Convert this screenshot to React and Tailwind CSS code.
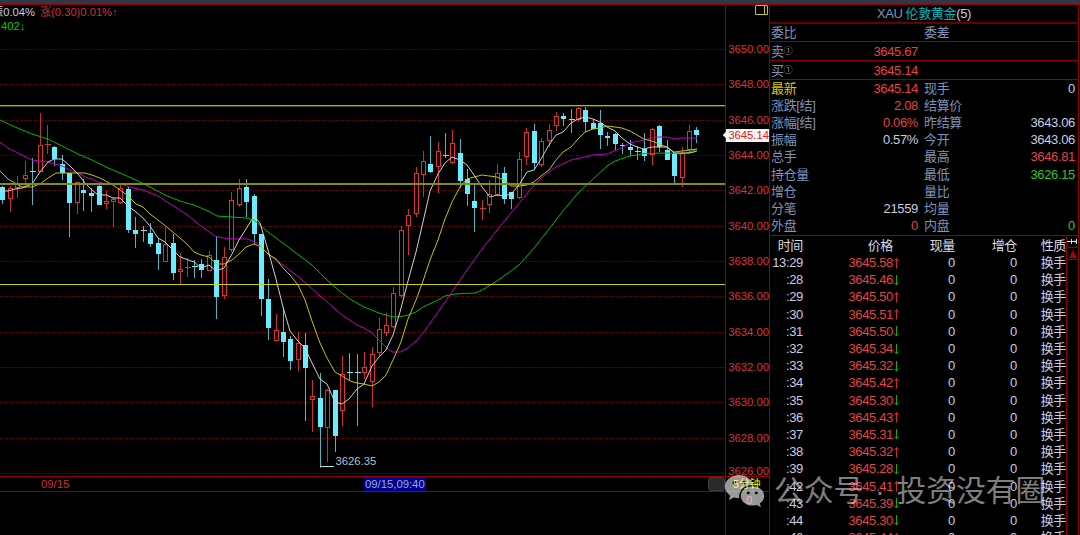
import React from "react";

// [x, body top, body bottom, high, low, direction]
const candles = [
  [2.5, 187, 200, 186, 204, "d"],
  [10.5, 188, 199, 186, 212, "u"],
  [17.5, 184, 188, 176, 198, "u"],
  [25.5, 175, 179, 161, 187, "u"],
  [32.5, 171, 171, 158, 205, "d"],
  [40.5, 145, 172, 113, 172, "u"],
  [47.5, 144, 144, 125, 154, "u"],
  [54.5, 147, 159, 146, 166, "d"],
  [62.5, 164, 173, 155, 180, "d"],
  [69.5, 173, 203, 173, 237, "d"],
  [77, 182, 203, 182, 214, "u"],
  [83.5, 190, 193, 179, 211, "d"],
  [91.5, 193, 196, 188, 212, "d"],
  [99, 186, 205, 183, 205, "d"],
  [106.5, 201, 204, 191, 209, "u"],
  [113.5, 199, 202, 197, 227, "u"],
  [120.5, 188, 203, 185, 204, "u"],
  [128.5, 189, 230, 187, 233, "d"],
  [135.5, 230, 234, 217, 248, "d"],
  [143.5, 230, 230, 226, 242, "d"],
  [150.5, 233, 244, 223, 247, "d"],
  [158.5, 243, 254, 238, 270, "d"],
  [165.5, 244, 262, 227, 262, "u"],
  [173, 243, 273, 234, 280, "d"],
  [180, 269, 272, 253, 285, "u"],
  [187.5, 267, 267, 258, 277, "u"],
  [194.5, 266, 266, 260, 278, "d"],
  [201.5, 264, 270, 259, 278, "d"],
  [209.5, 255, 271, 251, 271, "u"],
  [216.5, 260, 297, 237, 319, "d"],
  [224.5, 257, 296, 247, 299, "u"],
  [231.5, 200, 250, 192, 252, "u"],
  [239.5, 188, 205, 179, 207, "u"],
  [246.5, 187, 202, 179, 217, "d"],
  [254, 196, 234, 194, 244, "d"],
  [261, 234, 299, 234, 316, "d"],
  [268.5, 299, 328, 279, 340, "d"],
  [276, 330, 341, 314, 341, "u"],
  [283, 332, 342, 307, 357, "d"],
  [290.5, 339, 361, 336, 370, "d"],
  [298, 343, 360, 332, 371, "u"],
  [305.5, 345, 368, 333, 421, "d"],
  [312.5, 396, 400, 380, 432, "u"],
  [320.5, 398, 427, 373, 467, "d"],
  [327.5, 390, 428, 389, 462, "u"],
  [335.5, 390, 436, 390, 452, "d"],
  [342.5, 374, 411, 356, 426, "u"],
  [349.5, 372, 372, 353, 380, "d"],
  [357, 372, 372, 354, 426, "d"],
  [364, 367, 373, 352, 379, "u"],
  [372, 354, 382, 347, 407, "u"],
  [379, 329, 353, 318, 356, "u"],
  [386.5, 325, 333, 313, 336, "u"],
  [393.5, 293, 327, 287, 328, "u"],
  [401.5, 230, 296, 226, 298, "u"],
  [408.5, 215, 226, 209, 255, "u"],
  [416, 173, 214, 167, 217, "u"],
  [423, 161, 175, 151, 197, "u"],
  [430.5, 164, 172, 136, 173, "d"],
  [438, 151, 167, 142, 193, "u"],
  [445, 155, 155, 133, 158, "d"],
  [452.5, 143, 163, 130, 164, "u"],
  [460, 153, 181, 139, 188, "d"],
  [467.5, 179, 194, 169, 206, "d"],
  [474.5, 201, 208, 184, 232, "d"],
  [482.5, 208, 208, 200, 220, "u"],
  [489.5, 194, 205, 180, 213, "u"],
  [497, 173, 195, 164, 196, "u"],
  [504, 173, 199, 167, 204, "d"],
  [511.5, 192, 199, 192, 209, "d"],
  [519, 159, 198, 152, 199, "u"],
  [526.5, 132, 157, 128, 165, "u"],
  [534, 131, 163, 124, 170, "d"],
  [541.5, 141, 165, 138, 167, "u"],
  [549, 130, 141, 124, 147, "u"],
  [556, 116, 126, 112, 131, "u"],
  [563.5, 116, 119, 113, 126, "d"],
  [571, 119, 119, 109, 133, "d"],
  [578, 108, 120, 106, 122, "u"],
  [585.5, 110, 122, 107, 132, "d"],
  [593, 123, 129, 119, 129, "d"],
  [600.5, 123, 135, 110, 149, "d"],
  [607.5, 136, 138, 132, 146, "d"],
  [615, 134, 144, 133, 150, "d"],
  [622.5, 145, 145, 143, 154, "d"],
  [630.5, 147, 150, 140, 156, "d"],
  [637, 151, 151, 146, 160, "d"],
  [644.5, 149, 156, 133, 161, "d"],
  [652, 129, 155, 128, 165, "u"],
  [659, 126, 147, 125, 152, "d"],
  [667, 150, 160, 140, 160, "d"],
  [674, 154, 176, 154, 185, "d"],
  [682, 153, 178, 147, 187, "u"],
  [689, 131, 150, 125, 153, "u"],
  [696.5, 130, 135, 127, 143, "d"],
];

const averages = [
  {
    color: "#00b800",
    points:
      "0,120 15,127 32,134 48,139 62,146 78,154 85,157 92,160 106,167 120,173 136,180 150,187 165,195 180,201 194,205 208,211 217,216 232,217 246,218 254,220 261,226 268,232 283,243 300,256 312,265 327,280 342,293 350,299 364,307 379,313 386,315 393,317 401,316.5 408,315 416,312 423,307 438,300 445,296 455,294 475,293 482,290 497,281 511,271 520,264 534,248 549,229 563,211 578,193 593,179 607,166 615,161 630,156 637,155 644,153.5 667,153 682,154 690,152 697,149",
  },
  {
    color: "#c000c0",
    points:
      "0,142 8,148 22,155 32,160 48,162 62,166 70,170 78,173 85,177 92,179 98,182 106,184 120,184 130,187 143,190 158,196 172,205 180,210 190,217 201,226 215,236 224,238 232,239 248,239 258,244 268,254 283,265 300,278 320,296 327,302 342,315 357,325 364,328 372,333 379,340 386,347 392,352 400,352 408,348 416,341 423,333 438,312 452,292 467,270 482,249 497,230 511,213 530,190 541,178 556,167 571,160 585,157 593,155 607,154 619,149 630,143 644,140 652,138 659,137 667,137 674,139 682,138 697,138",
  },
  {
    color: "#c4c400",
    points:
      "0,171 8,179 15,183 22,187 32,187 40,184 48,178 56,173 62,173 85,173 92,175 100,178 113,185 120,190 128,196 136,204 143,207 150,214 158,220 168,228 180,238 187,244 194,252 201,255 209,257 217,264 224,264 232,260 239,254 246,247 254,244 261,247 268,254 276,259 283,268 290,275 298,285 305,300 312,321 320,343 327,358 335,372 342,376 350,381 357,383 364,384 372,386 379,382 386,375 393,360 401,342 408,319 416,300 423,281 430,260 438,240 445,219 452,202 460,187 467,179 474,177 482,175 497,177 504,180 511,186 519,186 527,185 534,182 541,176 549,170 556,160 563,152 571,147 578,139 585,132 593,129 600,128 607,126 615,127 622,128 630,131 637,135 644,139 652,141 659,144 667,147 674,152 682,151 690,150 697,149",
  },
  {
    color: "#d0d0d0",
    points:
      "0,191 8,191 15,189 22,188 32,184 40,172 48,162 54,159 62,159 70,166 78,174 85,183 92,190 98,195 106,195 113,198 120,198 128,206 136,212 143,218 150,226 158,238 165,242 173,250 180,257 194,262 201,268 209,265 216,271 224,268 232,254 239,240 246,229 254,216 260,223 268,250 276,279 283,307 290,331 298,341 305,348 312,363 320,379 327,384 335,402 342,404 349,399 357,389 364,384 372,366 379,357 386,350 393,335 400,312 408,281 416,252 423,222 430,191 438,174 445,163 452,157 460,160 467,165 474,175 482,187 490,197 497,195 504,196 511,194 519,185 527,172 534,170 541,159 549,145 556,135 563,132 571,123 578,119 585,117 593,119 600,122 607,127 615,131 622,138 630,144 637,147 644,149 652,147 667,147 674,153 682,153 690,153 697,151",
  },
];

const grid = [49, 84, 120, 155, 190, 226, 261, 296, 332, 367, 402, 438, 473];

const prices = [
  "3650.00", "3648.00", "3646.00", "3644.00", "3642.00", "3640.00",
  "3638.00", "3636.00", "3634.00", "3632.00", "3630.00", "3628.00",
];

const RED = "text-[#e44444]";
const WHITE = "text-[#c8cce0]";
const GREEN = "text-[#28c828]";

const quotes = [
  ["最新", "3645.14", RED, "现手", "0", WHITE],
  ["涨跌[结]", "2.08", RED, "结算价", "", WHITE],
  ["涨幅[结]", "0.06%", RED, "昨结算", "3643.06", WHITE],
  ["振幅", "0.57%", WHITE, "今开", "3643.06", WHITE],
  ["总手", "", WHITE, "最高", "3646.81", RED],
  ["持仓量", "", WHITE, "最低", "3626.15", GREEN],
  ["增仓", "", WHITE, "量比", "", WHITE],
  ["分笔", "21559", WHITE, "均量", "", WHITE],
  ["外盘", "0", RED, "内盘", "0", GREEN],
];

const ticks = [
  ["13:29", "3645.58", "up"],
  [":28", "3645.46", "down"],
  [":29", "3645.50", "up"],
  [":30", "3645.51", "up"],
  [":31", "3645.50", "down"],
  [":32", "3645.34", "down"],
  [":33", "3645.32", "down"],
  [":34", "3645.42", "up"],
  [":35", "3645.30", "down"],
  [":36", "3645.43", "up"],
  [":37", "3645.31", "down"],
  [":38", "3645.32", "up"],
  [":39", "3645.28", "down"],
  [":42", "3645.41", "up"],
  [":43", "3645.39", "down"],
  [":44", "3645.30", "down"],
  [":46", "3645.44", "up"],
];

const Arrow = ({ dir }) => (
  <svg width="7" height="12" viewBox="0 0 7 12" className="shrink-0" fill="none">
    {dir === "up" ? (
      <path d="M3.5 1.5V11.5M1 4.5L3.5 1.5L6 4.5" stroke="#c83030" />
    ) : (
      <path d="M3.5 1V11M1 8.5L3.5 11L6 8.5" stroke="#18a818" />
    )}
  </svg>
);

const Candle = ({ data }) => {
  const [cx, top, bottom, high, low, dir] = data;
  const x = Math.floor(cx);
  const up = dir === "u";
  const color = up ? "#d83434" : "#68ecff";
  const wick = up ? "#c83030" : "#4fb4c4";

  if (top === bottom) {
    return (
      <g>
        <rect x={x} y={high} width="1" height={low - high} fill={wick} />
        <rect x={x - 2} y={top} width="6" height="1" fill={color} />
      </g>
    );
  }

  return (
    <g>
      <rect x={x} y={high} width="1" height={top - high} fill={wick} />
      <rect x={x} y={bottom} width="1" height={low - bottom} fill={wick} />
      {up ? (
        <rect x={x - 1.5} y={top + 0.5} width="4" height={bottom - top - 1} fill="black" stroke={color} />
      ) : (
        <rect x={x - 2} y={top} width="5" height={bottom - top} fill={color} />
      )}
    </g>
  );
};

const CandleChart = () => (
  <svg width="725" height="471" viewBox="0 5 725 471" className="block">
    <g stroke="#5c0000" strokeDasharray="2 1" shapeRendering="crispEdges">
      {grid.map((y) => (
        <line key={y} x1="0" x2="725" y1={y + 0.5} y2={y + 0.5} />
      ))}
    </g>
    <g shapeRendering="crispEdges">
      {candles.map((c) => (
        <Candle key={c[0]} data={c} />
      ))}
    </g>
    <g fill="none" strokeWidth="1">
      {averages.map((a) => (
        <polyline key={a.color} points={a.points} stroke={a.color} strokeLinejoin="round" />
      ))}
    </g>
    <rect x="0" y="105" width="725" height="1" fill="#b4b400" />
    <rect x="0" y="106" width="725" height="1" fill="#404000" />
    <rect x="0" y="183" width="725" height="1" fill="#8c8c00" />
    <rect x="0" y="184" width="725" height="1" fill="#8c8c00" />
    <rect x="0" y="284" width="725" height="1" fill="#d0d000" />
    <path d="M320.5 467.5V466.5H334" stroke="#c8d8e0" fill="none" />
    <text x="335.5" y="465" fontSize="11.3" fill="#b8bcd0">
      3626.35
    </text>
  </svg>
);

const PriceAxis = () => (
  <div className="relative flex w-[44px] shrink-0 flex-col border-l border-[#900000] text-[11.3px] text-[#d83434]">
    <div className="flex h-[27px] shrink-0 justify-end">
      <svg width="14" height="11" viewBox="0 0 14 11" className="block" fill="none" stroke="#c8c800">
        <path d="M0.5 1V9.5H12.5V1M0.5 0.5H12.5M9.5 1V9.5" />
      </svg>
    </div>
    {prices.map((p) => (
      <div key={p} className="flex h-[35.35px] shrink-0 items-center justify-end leading-none">
        {p}
      </div>
    ))}
    <div className="flex h-[32px] shrink-0 items-center justify-end leading-none">3626.00</div>
    <div className="absolute top-[124px] left-0 flex h-[13px] w-[43px] items-center justify-end bg-[#f4f4f0] leading-none text-[#e02020]">
      3645.14
      <span className="absolute top-[3px] -left-[2px] size-[6px] rotate-45 bg-[#f4f4f0]" />
    </div>
  </div>
);

const ChartPanel = () => (
  <div className="flex w-[769px] shrink-0 flex-col">
    <div className="flex h-[471px] shrink-0">
      <div className="relative w-[725px] shrink-0">
        <CandleChart />
        <div className="absolute top-0 -left-[8px] text-[11.2px] leading-[15px] whitespace-nowrap">
          <div>
            <span className={WHITE}>振0.04%</span>
            <span className="ml-[5px] text-[#d03030]">涨(0.30)0.01%↑</span>
          </div>
          <div className="-mt-[1px] pl-[6px] text-[#00c800]">.402↓</div>
        </div>
      </div>
      <PriceAxis />
    </div>
    <div className="flex h-[16px] shrink-0 border-y border-[#900000] text-[11.3px] leading-[14px]">
      <div className="flex w-[708px] text-[#c83030]">
        <span className="ml-[41px] w-[323px]">09/15</span>
        <span className="h-[14px] bg-[#00008c] px-[1px] text-[#98a8e0]">09/15,09:40</span>
      </div>
      <div className="h-[14px] w-[17px] rounded-[3px] border border-[#3c3c3c] bg-[#2a2a2a]" />
      <div className="flex-1 border-l border-[#900000] pl-[7px] text-[10.8px] text-[#f0f000]">5分钟</div>
    </div>
    <div className="flex flex-1">
      <div className="w-[725px]" />
      <div className="flex-1 border-l border-[#900000] pl-[20px] text-[11.3px] leading-[17px] text-[#ff3030]">0</div>
    </div>
  </div>
);

const DepthRow = ({ label, value, right, first }) => (
  <div className={`flex items-center border-b border-[#900000] pl-[1px] ${first ? "h-[18px]" : "h-[19px]"}`}>
    <span className="flex w-[50px] items-center">{label}</span>
    <span className={`w-[97px] text-right ${RED}`}>{value}</span>
    <span className="ml-[6px]">{right}</span>
  </div>
);

const Quotes = () => (
  <div className="h-[156px] shrink-0 border-b border-[#900000]">
    <div className="-mt-[0.5px]">
      {quotes.map(([label, value, color, label2, value2, color2], i) => (
        <div key={label} className="flex h-[17.2px] items-center pl-[1px]">
          <span className={i === 0 ? "w-[50px] text-[#d8c800]" : "w-[50px]"}>{label}</span>
          <span className={`w-[97px] text-right ${color}`}>{value}</span>
          <span className="ml-[6px] w-[50px]">{label2}</span>
          <span className={`w-[101px] text-right ${color2}`}>{value2}</span>
        </div>
      ))}
    </div>
  </div>
);

const TickTable = () => (
  <div className="flex flex-1 overflow-hidden">
    <div className={`w-[296px] shrink-0 ${WHITE}`}>
      <div className="flex h-[18px] items-center text-[#d8dce4]">
        <span className="w-[33px] text-right">时间</span>
        <span className="w-[90px] text-right">价格</span>
        <span className="w-[62px] text-right">现量</span>
        <span className="w-[62px] text-right">增仓</span>
        <span className="w-[49px] text-right">性质</span>
      </div>
      {ticks.map(([time, price, dir]) => (
        <div key={time} className="flex h-[17.2px] items-center">
          <span className="w-[33px] text-right">{time}</span>
          <span className={`w-[90px] text-right ${RED}`}>{price}</span>
          <Arrow dir={dir} />
          <span className="w-[55px] text-right">0</span>
          <span className="w-[62px] text-right">0</span>
          <span className="w-[49px] text-right">换手</span>
        </div>
      ))}
    </div>
    <div className="flex flex-1 flex-col border-l border-[#900000]">
      <div className="flex h-[12px] items-center justify-center border-b border-[#900000]">
        <svg width="11" height="7" viewBox="0 0 11 7" fill="none" stroke="#e0e0e0">
          <path d="M0 3.5H4M4.5 1V6M4.5 3.5H9M9.5 1V6M8 2.5V4.5" />
        </svg>
      </div>
      <div className="flex h-[12px] items-center justify-center border-b border-[#900000]">
        <svg width="8" height="8" viewBox="0 0 8 8">
          <path d="M4 0L8 8H0Z" fill="#a80000" />
        </svg>
      </div>
    </div>
  </div>
);

const SidePanel = () => (
  <div className="flex w-[310px] shrink-0 flex-col border-x border-[#900000] text-[13px] leading-none tracking-[-0.35px] whitespace-nowrap text-[#8093b8]">
    <div className="flex h-[19px] items-center justify-center border-b-2 border-[#680000]">
      XAU<span className="ml-[3px] text-[#00b4bc]">伦敦黄金</span>
      <span className={WHITE}>(5)</span>
    </div>
    <DepthRow first label="委比" value="" right="委差" />
    <DepthRow label={<>卖<span className="text-[9px]">①</span></>} value="3645.67" />
    <DepthRow label={<>买<span className="text-[9px]">①</span></>} value="3645.14" />
    <Quotes />
    <TickTable />
  </div>
);

const Watermark = () => (
  <div className="absolute top-[470px] left-[725px] flex h-[42px] items-center text-[29.8px] leading-none whitespace-nowrap text-white/50">
    <svg width="40" height="34" viewBox="0 0 40 34" className="mr-[9px]" fill="white" fillOpacity="0.6" fillRule="evenodd">
      <path d="M14 1C6.300 1 0 6.200 0 12.600c0 3.700 2 6.800 5.200 8.900L4 26l5-2.600c1.700.5 3.400.8 5.200.8C13.500 16 19.500 11 27.600 11 26.500 5.200 21 1 14 1ZM9.300 7a1.800 1.800 0 1 1 0 3.600 1.800 1.800 0 0 1 0-3.600Zm9.600 0a1.800 1.800 0 1 1 0 3.600 1.800 1.800 0 0 1 0-3.600Z" />
      <path d="M27.500 12.200c-6.500 0-11.700 4.300-11.700 9.700s5.200 9.700 11.700 9.700c1.500 0 2.900-.2 4.200-.6l4.300 2.300-1.200-3.800c2.700-1.800 4.400-4.500 4.400-7.600 0-5.400-5.200-9.700-11.700-9.700Zm-4.200 5a1.500 1.500 0 1 1 0 3 1.500 1.500 0 0 1 0-3Zm8 0a1.500 1.500 0 1 1 0 3 1.500 1.500 0 0 1 0-3Z" />
    </svg>
    <span>公众号</span>
    <span className="w-[33px] text-center">·</span>
    <span>投资没有圈</span>
  </div>
);

const App = () => {
  return (
    <div className="relative flex h-[535px] w-[1080px] flex-col overflow-hidden bg-black font-['Liberation_Sans','Noto_Sans_CJK_SC',sans-serif]">
      <div className="h-[4px] shrink-0 bg-[#323645]" />
      <div className="h-[1px] shrink-0 bg-[#900000]" />
      <div className="flex h-[530px]">
        <ChartPanel />
        <SidePanel />
      </div>
      <Watermark />
    </div>
  );
};

export default App;
